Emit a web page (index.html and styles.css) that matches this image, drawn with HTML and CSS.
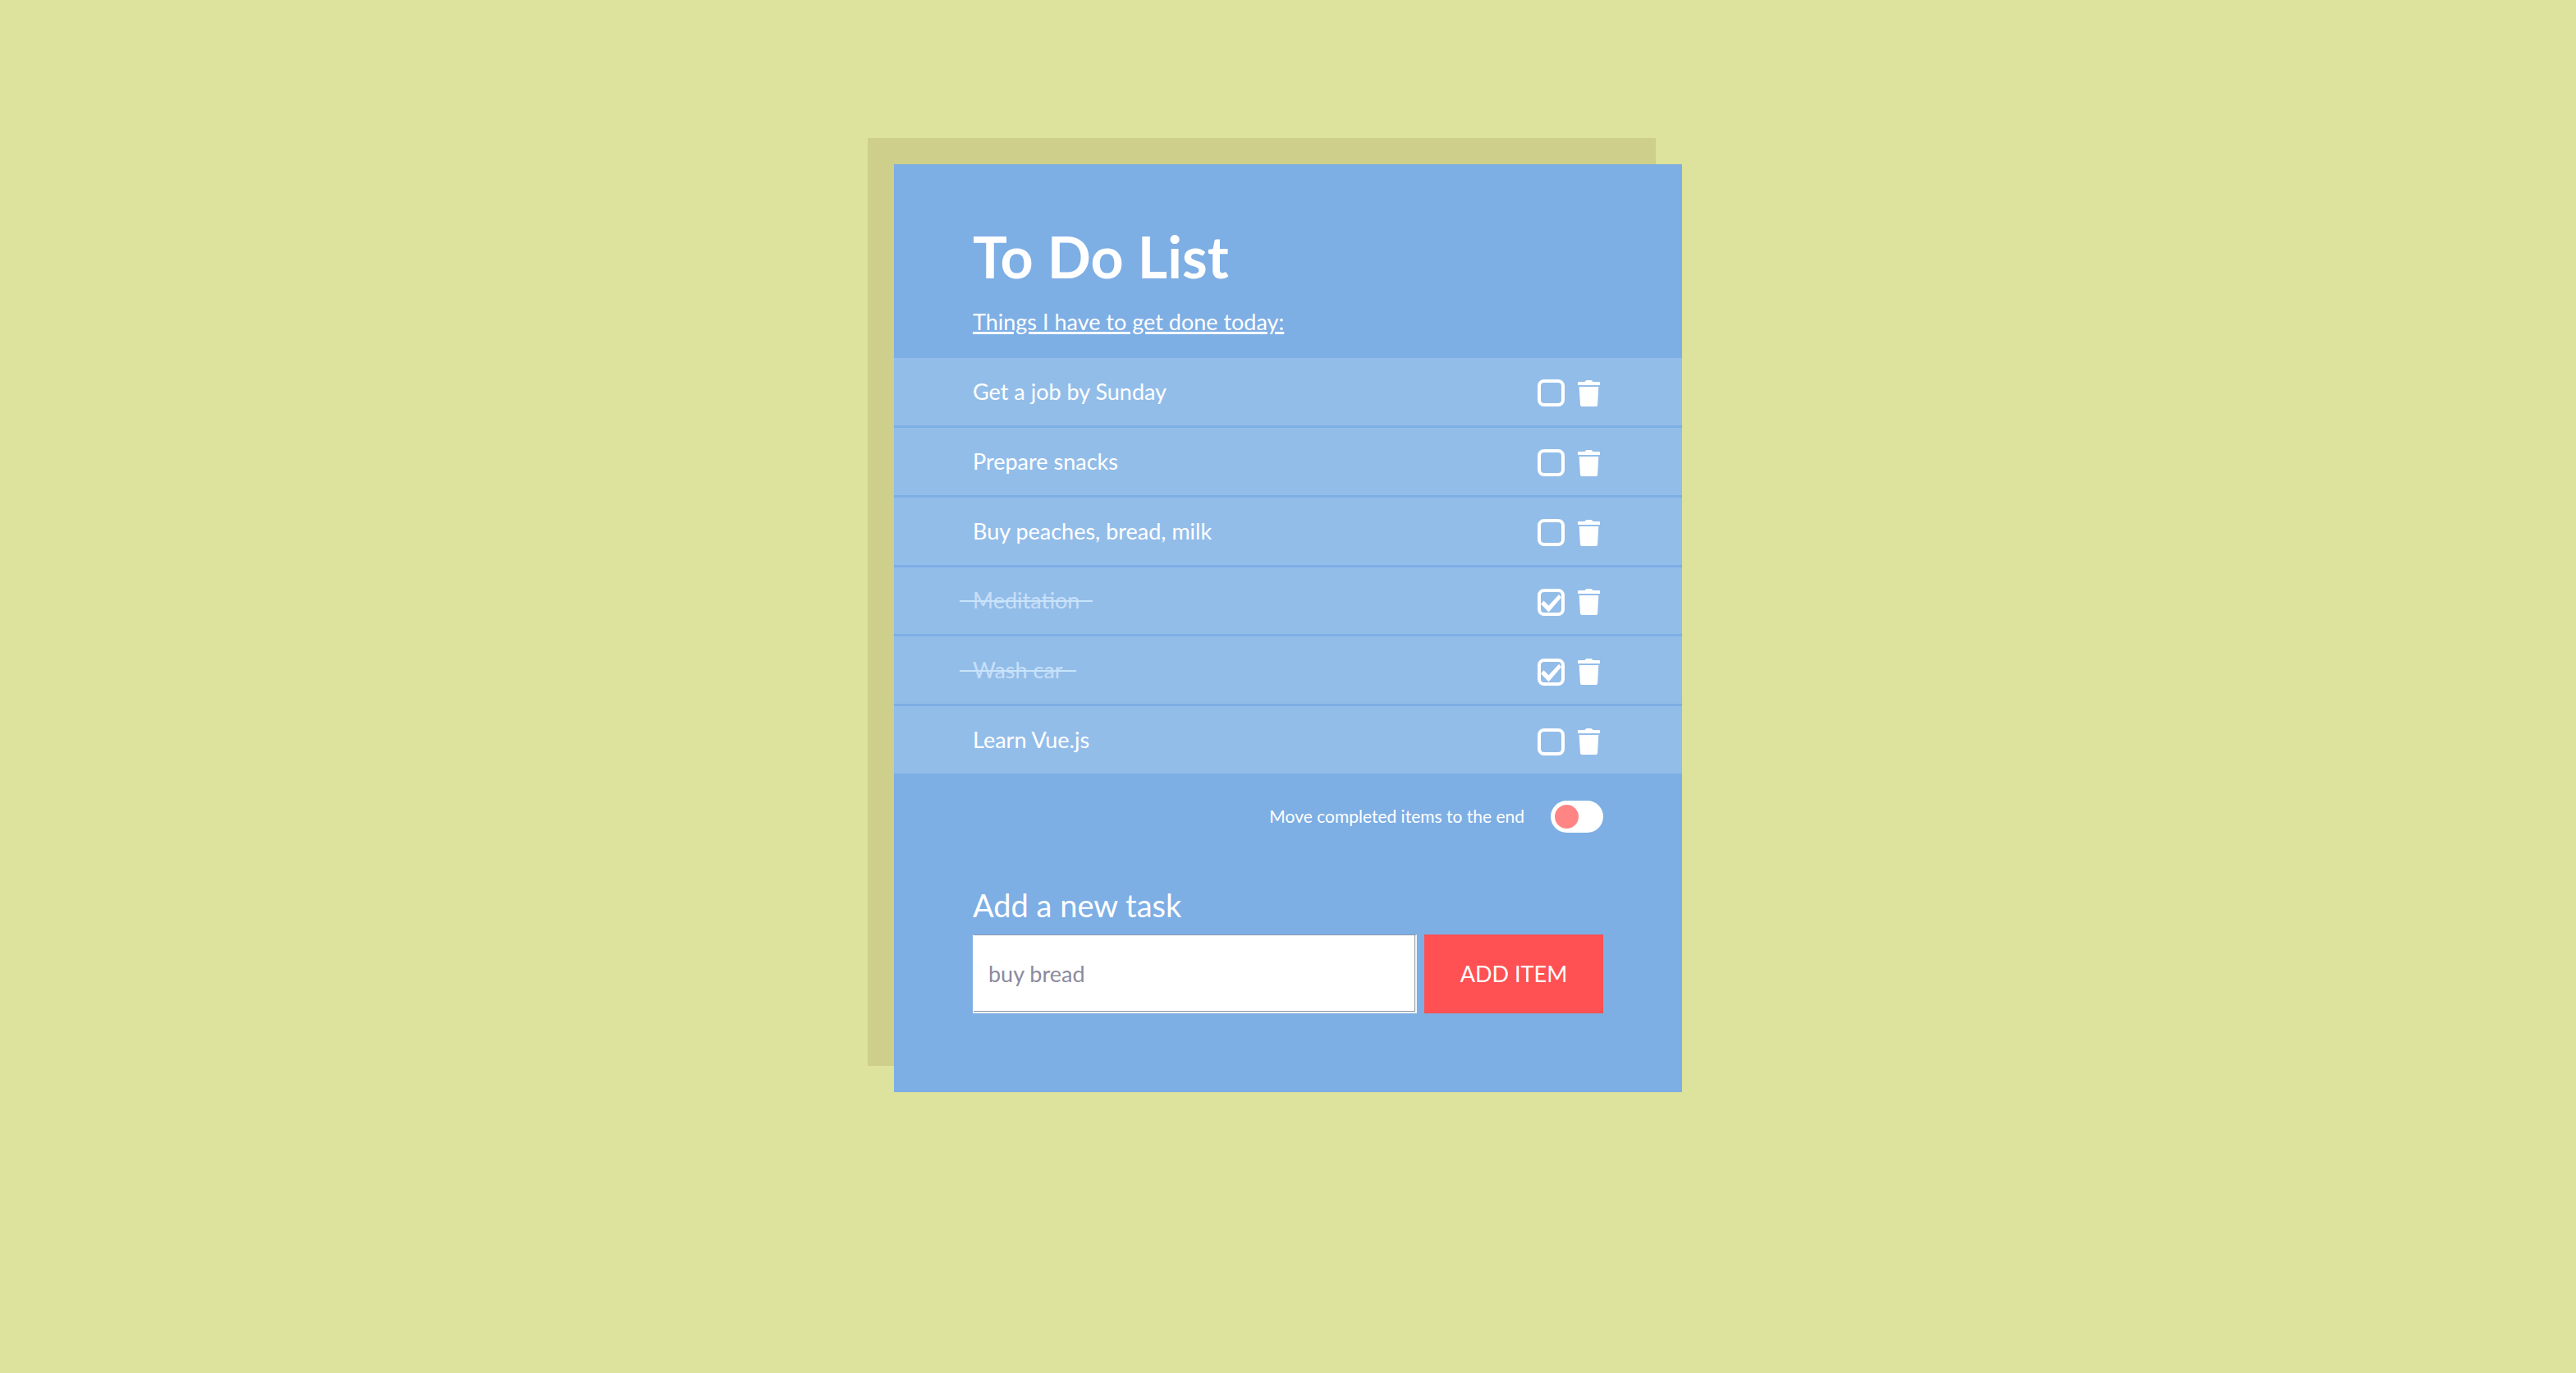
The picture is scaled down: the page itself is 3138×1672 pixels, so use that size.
FILE: index.html
```html
<!DOCTYPE html>
<html lang="en">
<head>
<meta charset="utf-8">
<meta name="viewport" content="width=device-width, initial-scale=1">
<title>To Do List</title>
<link rel="stylesheet" href="styles.css">
</head>
<body>
<svg class="sprite" aria-hidden="true">
  <symbol id="trash" viewBox="0 0 27 32">
    <path d="M1 2h7.500C9.500 .5 10.500 0 11.500 0h4c1 0 2 .5 3 2H26q1 0 1 1v3H0V3q0-1 1-1zM1.700 8h23.600l-1.200 22q-.2 2-2 2H5q-1.800 0-2-2z"/>
  </symbol>
</svg>
<main class="card">
  <header class="heading">
    <h1 class="title">To Do List</h1>
    <p class="subtitle">Things I have to get done today:</p>
  </header>
  <ul class="list">
    <li class="item">
      <label class="name" for="t1"><span>Get a job by Sunday</span></label>
      <input class="check" type="checkbox" id="t1">
      <button class="remove" type="button" aria-label="Delete"><svg class="icon"><use href="#trash"/></svg></button>
    </li>
    <li class="item">
      <label class="name" for="t2"><span>Prepare snacks</span></label>
      <input class="check" type="checkbox" id="t2">
      <button class="remove" type="button" aria-label="Delete"><svg class="icon"><use href="#trash"/></svg></button>
    </li>
    <li class="item">
      <label class="name" for="t3"><span>Buy peaches, bread, milk</span></label>
      <input class="check" type="checkbox" id="t3">
      <button class="remove" type="button" aria-label="Delete"><svg class="icon"><use href="#trash"/></svg></button>
    </li>
    <li class="item done">
      <label class="name" for="t4"><span>Meditation</span></label>
      <input class="check" type="checkbox" id="t4" checked>
      <button class="remove" type="button" aria-label="Delete"><svg class="icon"><use href="#trash"/></svg></button>
    </li>
    <li class="item done">
      <label class="name" for="t5"><span>Wash car</span></label>
      <input class="check" type="checkbox" id="t5" checked>
      <button class="remove" type="button" aria-label="Delete"><svg class="icon"><use href="#trash"/></svg></button>
    </li>
    <li class="item">
      <label class="name" for="t6"><span>Learn Vue.js</span></label>
      <input class="check" type="checkbox" id="t6">
      <button class="remove" type="button" aria-label="Delete"><svg class="icon"><use href="#trash"/></svg></button>
    </li>
  </ul>
  <div class="option">
    <label for="move">Move completed items to the end</label>
    <input class="switch" type="checkbox" role="switch" id="move">
  </div>
  <form class="add">
    <label class="add-label" for="task">Add a new task</label>
    <div class="add-row">
      <input class="field" type="text" id="task" placeholder="buy bread">
      <button class="submit" type="button">ADD ITEM</button>
    </div>
  </form>
</main>
</body>
</html>
```
FILE: styles.css
```css
* {
  box-sizing: border-box;
}

body {
  margin: 0;
  padding: 200px 32px;
  background: #dde29c;
  color: #fff;
  font-family: Lato, sans-serif;
  font-size: 27px;
  line-height: 40px;
}

input,
button {
  margin: 0;
  font: inherit;
}

.sprite {
  display: none;
}

.card {
  max-width: 960px;
  margin: 0 auto;
  padding-bottom: 96px;
  background: #7daee4;
  box-shadow: -32px -32px 0 #cdcf8a;
}

.heading {
  padding: 64px 96px 24px;
}

.title {
  margin: 0 0 12px;
  font-size: 70px;
  line-height: 96px;
}

.subtitle {
  margin: 0;
  text-decoration: underline;
  text-decoration-thickness: 3px;
}

.list {
  display: grid;
  grid-auto-rows: 1fr;
  gap: 3px;
  min-height: 506px;
  margin: 0;
  padding: 0;
  list-style: none;
}

.item {
  display: flex;
  align-items: center;
  padding: 4px 96px 0;
  background: #93bde9;
}

.name {
  flex: 1;
  margin-bottom: 4px;
}

.done span {
  position: relative;
  color: #c8dff8;
}

.done span::after {
  content: "";
  position: absolute;
  inset: 50% -16px auto;
  height: 2px;
  background: #c8e4fa;
}

.check {
  appearance: none;
  display: grid;
  width: 33px;
  height: 33px;
  margin-right: 16px;
  border: 4px solid #fff;
  border-radius: 8px;
}

.check:checked::before {
  content: "";
  background: #fff;
  clip-path: polygon(0 58%, 14% 42%, 38% 66%, 88% 12%, 100% 26%, 38% 98%);
}

.remove {
  display: flex;
  padding: 0 4px 0 0;
  border: 0;
  background: none;
}

.icon {
  width: 27px;
  height: 32px;
  fill: #fff;
}

.option {
  display: flex;
  justify-content: flex-end;
  align-items: center;
  gap: 32px;
  padding: 32px 96px 56px;
  font-size: 21px;
}

.switch {
  appearance: none;
  width: 64px;
  height: 39px;
  padding: 5px;
  border-radius: 20px;
  background: #fff;
}

.switch::before {
  content: "";
  display: block;
  width: 29px;
  height: 29px;
  border-radius: 50%;
  background: #ff8585;
}

.add {
  padding: 0 96px;
}

.add-label {
  display: block;
  margin-bottom: 4px;
  font-size: 38px;
  line-height: 64px;
}

.add-row {
  display: flex;
  gap: 9px;
}

.field {
  flex: 1;
  min-width: 0;
  height: 96px;
  padding: 0 18px;
  border: solid;
  border-color: #8b9aae #f4f6f8 #f4f6f8 #fff;
  border-width: 1px 2px 2px 1px;
  box-shadow: inset -1px -1px 0 #8d99a8;
  background: #fff;
}

.field::placeholder {
  color: #8c8a9c;
  opacity: 1;
}

.submit {
  width: 218px;
  border: 0;
  background: #ff5053;
  color: #fff;
}
```
